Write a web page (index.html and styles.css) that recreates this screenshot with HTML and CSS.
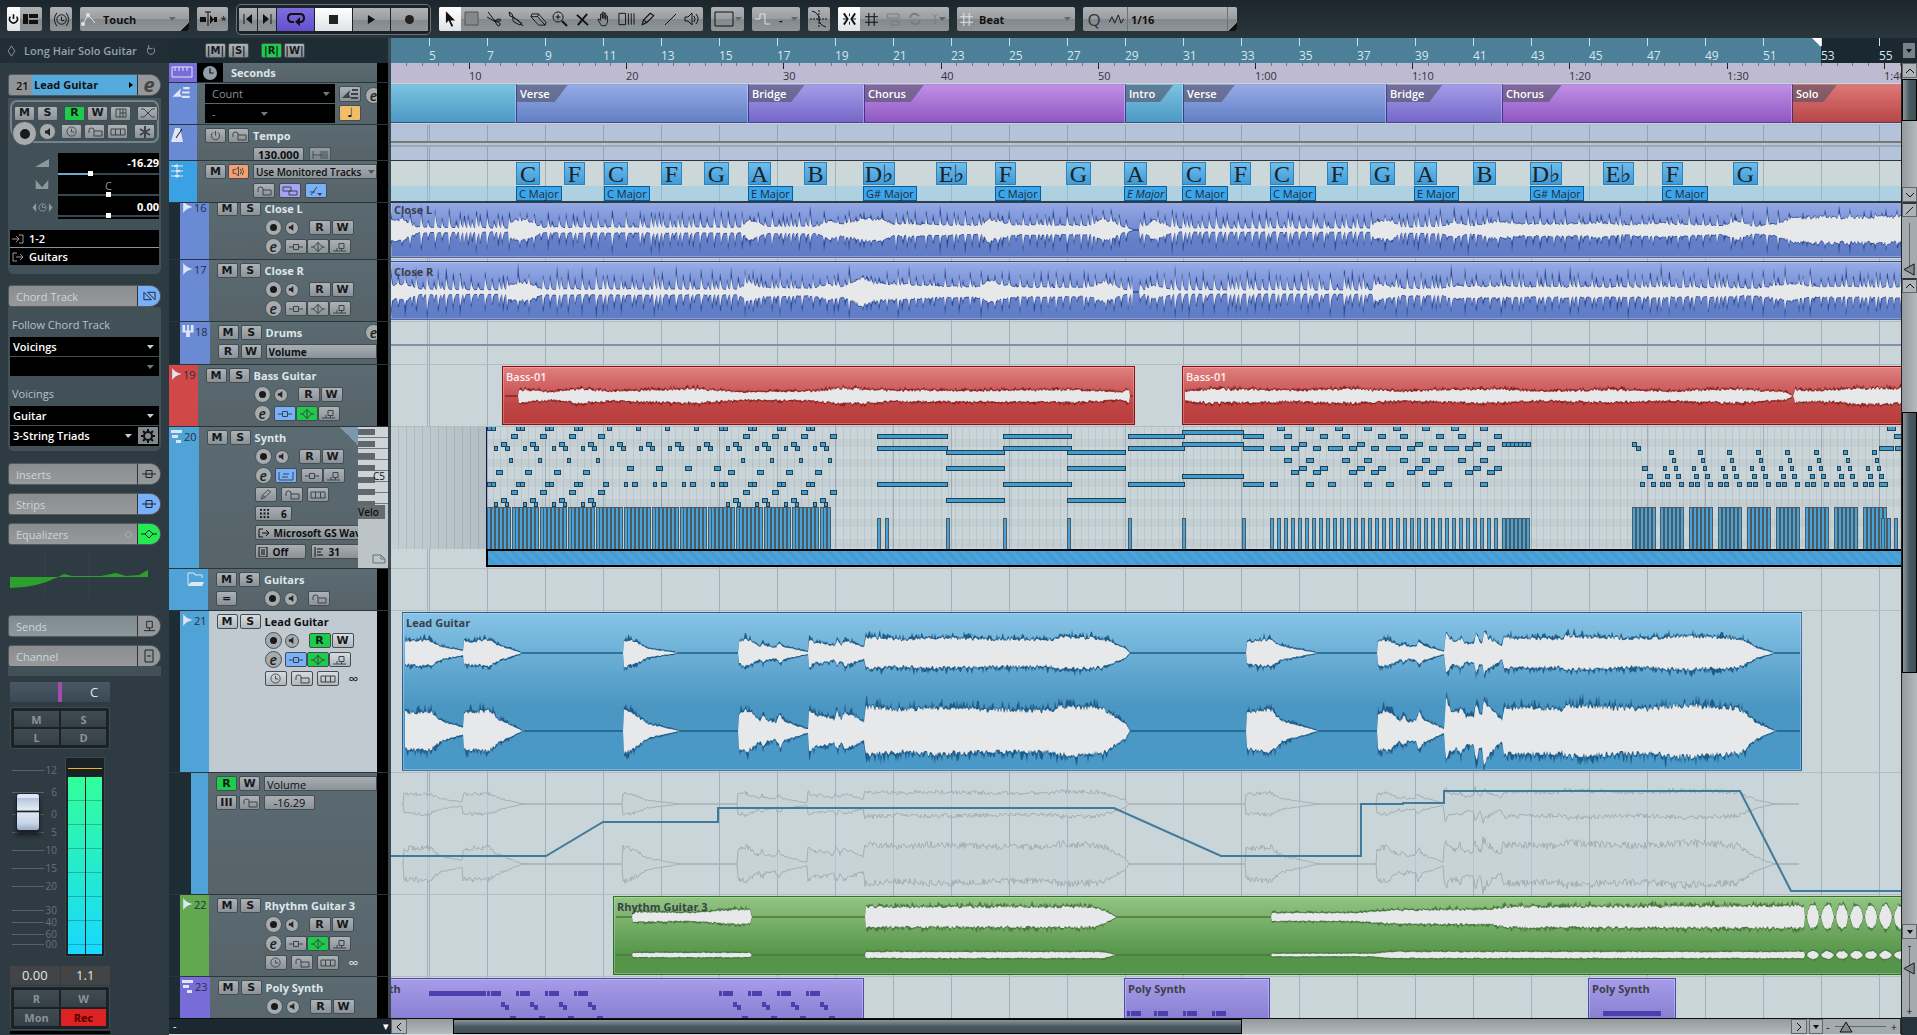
FILE: index.html
```
<!DOCTYPE html>
<html lang="en">
<head>
  <meta charset="UTF-8">
  <title>Project</title>
  <link rel="stylesheet" href="styles.css">
</head>
<body>
  <!-- icon sprite -->
  <svg class="sprite" width="0" height="0">
    <symbol id="i-lock" viewBox="0 0 16 10"><path d="M2 6V3q0-2 2.500-2t2.500 2v1M7 4h8v5H7z" /></symbol>
    <symbol id="i-clock" viewBox="0 0 12 12"><path d="M6 1a5 5 0 1 0 .1 0M6 3v3.500h3" /></symbol>
    <symbol id="i-lanes" viewBox="0 0 16 10"><path d="M1 2h14v6H1zM5.500 2v6M10.500 2v6" /></symbol>
    <symbol id="i-insert" viewBox="0 0 16 10"><path d="M1 5h4M11 5h4M5.500 2.500h5v5h-5z" /></symbol>
    <symbol id="i-eq" viewBox="0 0 16 12"><path d="M1 6h3M12 6h3M8 1v10M8 1.500L3.500 6L8 10.500L12.500 6z" /></symbol>
    <symbol id="i-send" viewBox="0 0 16 10"><path d="M1 9h4V6M5 9h9M7 1.500h5v5H7zM9.500 6.500V9" /></symbol>
    <symbol id="i-speaker" viewBox="0 0 10 10"><path class="solid" d="M2 3.500h2L7 1v8L4 6.500H2z" /></symbol>
    <symbol id="i-wave" viewBox="0 0 12 14"><path class="solid" d="M1 0Q4 5 12 7Q4 9 1 14z" /></symbol>
    <symbol id="i-midi" viewBox="0 0 12 13"><path class="solid" d="M0 0h11v3H0zM1 5h6v3H1zM5 10h5v3H5z" /></symbol>
    <symbol id="i-edit" viewBox="0 0 16 12"><path class="solid" d="M0 10l8-8l-1 5l2 3z" /><path class="solid" d="M10 1h6v2h-6zM9 5h7v2H9zM9 9h7v2H9z" /></symbol>
    <symbol id="i-power" viewBox="0 0 12 12"><path d="M3.500 2.500a4.500 4.500 0 1 0 5 0M6 1v5" /></symbol>
    <symbol id="i-pencil" viewBox="0 0 14 12"><path d="M2 11l1-4L9 1l3 2l-6 6zM3 7l3 2" /></symbol>
    <symbol id="i-strip" viewBox="0 0 16 10"><path d="M1 5h14M5 1.500h6v7H5z" /></symbol>
    <symbol id="i-grid" viewBox="0 0 14 14"><path d="M4.500 1v12M9.500 1v12M1 4.500h12M1 9.500h12" /></symbol>
    <symbol id="i-scale" viewBox="0 0 16 10"><path d="M1 1v8h14V1M5 3h6M4 6h6" /></symbol>
    <symbol id="i-out" viewBox="0 0 12 10"><path d="M5 1H1v8h4M4 5h7M8 2l3 3l-3 3" /></symbol>
    <symbol id="i-in" viewBox="0 0 12 10"><path d="M7 1h4v8H7M0 5h7M4 2l3 3l-3 3" /></symbol>
  </svg>

  <div class="app">
    <header class="toolbar">
      <div class="group">
        <button class="tb lit w13" aria-label="Activate project"><svg viewBox="0 0 14 16" width="11" height="14"><path class="bold" d="M3 5a5 5 0 1 0 8 0M7 2v6" /></svg></button>
        <button class="tb w22" aria-label="Window layout"><svg viewBox="0 0 16 12" width="16" height="12"><path class="solid" d="M0 1h5v10H0zM6 1h9v4H6zM6 7h9v4H6z" /></svg></button>
      </div>
      <div class="group">
        <button class="tb w22" aria-label="Delay compensation"><svg viewBox="0 0 18 18" width="17" height="17"><path d="M9 4a5 5 0 1 0 .1 0M9 6v4h3M4 2q-5 7 0 14M14 2q5 7 0 14" /></svg></button>
      </div>
      <div class="group touch">
        <svg class="light" viewBox="0 0 18 16" width="18" height="16"><path d="M3 13L8 4L12 8L15 12" /><circle class="solid" cx="3" cy="13" r="2" /><circle class="solid" cx="8" cy="4" r="2" /></svg>
        <select class="tb-select" aria-label="Automation mode"><option>Touch</option></select>
        <span class="corner"></span>
      </div>
      <div class="group">
        <button class="tb w22" aria-label="Auto scroll"><svg viewBox="0 0 18 16" width="18" height="18"><path class="solid" d="M1 6h6v5H1zM11 4l4 4.500L11 13zM15 6h3v5h-3z" /><path d="M9 1v14M6 1h6" /></svg></button>
        <button class="tb w9" aria-label="Suspend auto scroll">*</button>
      </div>
      <div class="transport">
        <button class="tb w18" aria-label="Previous"><svg viewBox="0 0 12 12" width="12" height="12"><path d="M2 1v10" /><path class="solid" d="M10 1v10L4 6z" /></svg></button>
        <button class="tb w18" aria-label="Next"><svg viewBox="0 0 12 12" width="12" height="12"><path d="M10 1v10" /><path class="solid" d="M2 1v10L8 6z" /></svg></button>
        <button class="tb w37 cycle" aria-label="Cycle"><svg viewBox="0 0 18 14" width="18" height="14"><path class="bold" d="M7 10H5Q1 10 1 6T5 2h8q4 0 4 4t-4 4" /><path class="solid" d="M13 5v9L8 10z" /></svg></button>
        <button class="tb w37 lit" aria-label="Stop"><i class="stop"></i></button>
        <button class="tb w37" aria-label="Play"><svg viewBox="0 0 10 10" width="9" height="9"><path class="solid" d="M1 0v10L9 5z" /></svg></button>
        <button class="tb w37" aria-label="Record"><i class="rec-dot"></i></button>
      </div>
      <div class="group tools">
        <button class="tb w22 lit" aria-label="Object selection"><svg viewBox="0 0 12 18" width="11" height="17"><path class="solid" d="M1 0v13l3-3l3 7l2-1l-3-6h5z" /></svg></button>
        <button class="tb w22" aria-label="Range selection"><svg viewBox="0 0 16 16" width="16" height="16"><path class="grey" d="M1 1h13v13H1z" /></svg></button>
        <button class="tb w22" aria-label="Split"><svg viewBox="0 0 16 16" width="16" height="16"><path d="M2 1l7 9M1 6l9 5M9 10l2 4q2 2 3 0t-2-3l-3-1l4 0q2 0 2-1t-3-1z" /></svg></button>
        <button class="tb w22" aria-label="Glue"><svg viewBox="0 0 16 16" width="16" height="16"><path d="M1 1l3 2l1 3l6 4l4 5M1 1l1 4l3 1M5 6q-1 3 1 5l6 3q2 0 1-3M5 6l7 5" /></svg></button>
        <button class="tb w22" aria-label="Erase"><svg viewBox="0 0 18 16" width="17" height="15"><path d="M2 2h7l8 9l-1 3H9L1 5zM1 5h7l8 9M8 5l1-3" /></svg></button>
        <button class="tb w22" aria-label="Zoom"><svg viewBox="0 0 16 16" width="16" height="16"><path d="M6 1a5 5 0 1 0 .1 0M6 3.500v5M3.500 6h5" /><path class="bold" d="M10 10l5 5" /></svg></button>
        <button class="tb w22" aria-label="Mute"><svg viewBox="0 0 14 14" width="13" height="15"><path class="bold" d="M1 2l12 11M12 1L2 13" /></svg></button>
        <button class="tb w22" aria-label="Time warp"><svg viewBox="0 0 16 18" width="14" height="17"><path d="M5 16L1 9q1-2 3 1V3q1-1 2 0v5V1q1-1 2 0v7V2q1-1 2 0v7V5q1-1 2 0v7l-2 4z" /></svg></button>
        <button class="tb w22" aria-label="Comp"><svg viewBox="0 0 18 14" width="17" height="14"><path d="M1 1h7v12H1zM11 1v12M14 1v12M17 1v12" /></svg></button>
        <button class="tb w22" aria-label="Draw"><svg viewBox="0 0 14 12" width="16" height="16"><use href="#i-pencil" /></svg></button>
        <button class="tb w22" aria-label="Line"><svg viewBox="0 0 14 14" width="14" height="14"><path d="M2 13L13 2" /></svg></button>
        <button class="tb w22" aria-label="Play tool"><svg viewBox="0 0 16 14" width="16" height="14"><path d="M1 5h3l4-4v12L4 9H1zM10 4q2 3 0 6M12 2q4 5 0 10" /></svg></button>
      </div>
      <div class="group w33">
        <button class="tb w33 drop" aria-label="Color menu"><svg viewBox="0 0 20 16" width="20" height="16"><path d="M1 1h18v14H1z" /></svg></button>
      </div>
      <div class="group w48">
        <button class="tb w48 drop" aria-label="Nudge"><svg class="light" viewBox="0 0 16 12" width="16" height="12"><path d="M0 6h5V1h5v10h5" /></svg><b>-</b></button>
      </div>
      <div class="group">
        <button class="tb w22" aria-label="Snap to zero crossing"><svg viewBox="0 0 18 18" width="18" height="18"><path stroke-dasharray="2 1" d="M9 0v18M0 9h18" /><path d="M2 1Q9 3 9 9T16 17" /></svg></button>
      </div>
      <div class="group snap">
        <button class="tb w22 lit" aria-label="Snap"><svg viewBox="0 0 16 14" width="15" height="14"><path class="bold" d="M2 1l4 6l-4 6M14 1l-4 6l4 6" /><path d="M8 1v3M8 10v3M1 7h5M15 7h-5" /></svg></button>
        <button class="tb w22" aria-label="Snap type grid"><svg width="15" height="15"><use href="#i-grid" /></svg></button>
        <span class="faint"><svg viewBox="0 0 14 14" width="14" height="14"><path d="M1 2h12v4H1zM5 9h8v4H5z" /></svg></span>
        <span class="faint"><svg viewBox="0 0 14 14" width="14" height="14"><path class="bold" d="M2 6q1-5 6-4l3 2M12 8q-1 5-6 4l-3-2" /></svg></span>
        <span class="faint drop"><svg viewBox="0 0 14 14" width="12" height="12"><path d="M7 3v10M4 1l3 3l3-3" /></svg></span>
      </div>
      <div class="group beat">
        <svg class="light" width="15" height="15"><use href="#i-grid" /></svg>
        <select class="tb-select" aria-label="Grid type"><option>Beat</option></select>
      </div>
      <div class="group quantize">
        <button class="tb w22 q" aria-label="Quantize">Q</button>
        <button class="tb w22" aria-label="Iterative quantize"><svg viewBox="0 0 16 12" width="15" height="11"><path d="M0 9l3-6l3 7l4-9l3 9l3-5" /></svg></button>
        <select class="tb-select bare" aria-label="Quantize preset"><option>1/16</option></select>
        <span class="corner"></span>
      </div>
    </header>

    <div class="main">
      <aside class="inspector">
        <div class="insp-title">
          <svg viewBox="0 0 10 14" width="9" height="12"><path d="M5 1l4 6l-4 6l-4-6z" /></svg>
          <span>Long Hair Solo Guitar</span>
          <svg viewBox="0 0 12 12" width="11" height="11"><path d="M4 3a4 4 0 1 0 5 0M4 0v4h4" /></svg>
        </div>

        <div class="section-bar track-name"><span class="num">21</span><b>Lead Guitar</b><i class="mini-arrow"></i><button class="badge e" aria-label="Edit channel">e</button></div>
        <div class="panel">
          <div class="insp-buttons">
            <button class="b">M</button><button class="b">S</button><button class="b on push">R</button><button class="b">W</button>
            <button class="b" aria-label="Freeze"><svg viewBox="0 0 14 10" width="14" height="10"><path d="M2 1h10v8H2zM6 1v8M9 1v8M6 5h6" /></svg></button>
            <button class="b push" aria-label="Auto fades"><svg viewBox="0 0 16 10" width="16" height="10"><path d="M1 1h3l8 8h3M1 9h3l8-8h3" /></svg></button>
          </div>
          <div class="insp-buttons">
            <button class="round big" aria-label="Record enable"><i></i></button>
            <button class="round" aria-label="Monitor"><svg width="10" height="10"><use href="#i-speaker" /></svg></button>
            <button class="b push2" aria-label="Time base"><svg width="11" height="11"><use href="#i-clock" /></svg></button>
            <button class="b" aria-label="Lock"><svg width="16" height="10"><use href="#i-lock" /></svg></button>
            <button class="b" aria-label="Lanes"><svg width="16" height="10"><use href="#i-lanes" /></svg></button>
            <button class="b push" aria-label="Freeze channel"><svg viewBox="0 0 12 12" width="12" height="12"><path class="bold" d="M6 0v12M1 3l10 6M11 3L1 9" /></svg></button>
          </div>
          <div class="levels">
            <div class="level-icons">
              <svg viewBox="0 0 14 8" width="14" height="8"><path class="solid" d="M0 8L14 0V8z" /></svg>
              <svg viewBox="0 0 14 10" width="14" height="9"><path class="solid" d="M0 0l7 8l7-8v10H0z" /></svg>
              <svg viewBox="0 0 22 12" width="21" height="11"><path class="solid" d="M4 1v10L0 6zM18 1v10L22 6z" /><path d="M11 2a4 4 0 1 0 .1 0M11 3v3h3" /></svg>
            </div>
            <div class="display">
              <output>-16.29</output><input class="thin vol" type="range" value="31" aria-label="Volume">
              <output class="mid">C</output><input class="thin" type="range" value="50" aria-label="Pan">
              <output>0.00</output><input class="thin" type="range" value="50" aria-label="Delay">
            </div>
          </div>
          <div class="io">
            <div><svg width="12" height="10"><use href="#i-in" /></svg>1-2</div>
            <div><svg width="12" height="10"><use href="#i-out" /></svg>Guitars</div>
          </div>
        </div>

        <div class="section-bar chord-bar">Chord Track<button class="badge blue" aria-label="Chord track"><svg viewBox="0 0 14 10" width="13" height="10"><path d="M1 1v8h8zM5 1h8v8z" /></svg></button></div>
        <div class="panel chord-panel">
          <label for="follow">Follow Chord Track</label>
          <select id="follow" class="black"><option>Voicings</option></select>
          <select class="black empty" aria-label="Follow source"><option></option></select>
          <label for="voicing">Voicings</label>
          <select id="voicing" class="black"><option>Guitar</option></select>
          <div class="with-gear">
            <select class="black" aria-label="Voicing type"><option>3-String Triads</option></select>
            <button class="gear" aria-label="Voicing setup"><svg viewBox="0 0 14 14" width="14" height="14"><circle class="bold" cx="7" cy="7" r="4" /><path class="bold" d="M7 0v3M7 11v3M0 7h3M11 7h3M2 2l2 2M10 10l2 2M12 2l-2 2M4 10l-2 2" /></svg></button>
          </div>
        </div>

        <div class="section-bar">Inserts<button class="badge" aria-label="Inserts"><svg width="16" height="10"><use href="#i-strip" /></svg></button></div>
        <div class="section-bar">Strips<button class="badge blue" aria-label="Strips"><svg width="16" height="10"><use href="#i-strip" /></svg></button></div>
        <div class="section-bar">Equalizers<svg class="dia" viewBox="0 0 10 10" width="9" height="9"><path d="M5 1L9 5L5 9L1 5z" /></svg><button class="badge green" aria-label="Equalizers"><svg viewBox="0 0 16 10" width="16" height="10"><path d="M0 5h4M12 5h4M8 1l4 4l-4 4l-4-4z" /></svg></button></div>
        <svg class="eq-curve" viewBox="0 0 153 60" height="60"><path class="guide" d="M37 5v48M81 5v48" /><path class="fill" d="M2 32H50Q28 43 2 43z" /><path class="fill" d="M48 33L56 29L64 31H93L108 28L118 31L131 30L140 25V32H48z" /></svg>
        <div class="section-bar sends">Sends<button class="badge" aria-label="Sends"><svg viewBox="0 0 14 12" width="13" height="12"><path d="M4 1h6v7H4zM1 11h12M7 8v3" /></svg></button></div>
        <div class="section-bar">Channel<button class="badge" aria-label="Channel"><svg viewBox="0 0 10 14" width="10" height="14"><path d="M1 1h8v12H1zM3 7h4" /></svg></button></div>
        <div class="panel channel-end"></div>

        <div class="channel">
          <div class="pan"><i></i><span>C</span></div>
          <div class="quad"><button>M</button><button>S</button><button>L</button><button>D</button></div>
          <div class="fader-row">
            <input class="fader" type="range" min="0" max="100" value="76" aria-label="Channel volume">
            <svg class="scale" id="scale" width="50" height="200"></svg>
            <div class="meter"><i></i><i></i></div>
          </div>
          <div class="nums"><output>0.00</output><output>1.1</output></div>
          <div class="quad low"><button>R</button><button>W</button><button>Mon</button><button class="rec">Rec</button></div>
          <div class="baseline"></div>
        </div>
      </aside>

      <section class="project">
        <div class="row ruler-row">
          <div class="head global">
            <button class="b wide">|M|</button><button class="b wide">|S|</button><button class="b wide on next">|R|</button><button class="b wide">|W|</button>
          </div>
          <div class="lane bars" id="bars"><div class="past"></div></div>
        </div>
        <div class="row seconds-row">
          <div class="head">
            <div class="strip violet"><svg viewBox="0 0 22 12" width="22" height="12"><path d="M1 1h20v10H1zM4 1v4M8 1v4M12 1v4M16 1v4" /></svg></div>
            <div class="clock-box"><svg viewBox="0 0 12 12" width="14" height="14"><circle class="solid" cx="6" cy="6" r="6" /><path class="hand" d="M6 2v4h3" /></svg></div>
            <div class="body seconds-name">Seconds</div>
            <div class="led"></div>
          </div>
          <div class="lane seconds" id="seconds"></div>
        </div>
        <div class="row arranger-row">
          <div class="head">
            <div class="strip azure"><svg width="20" height="13"><use href="#i-edit" /></svg></div>
            <div class="body arranger-body">
              <div class="stack"><select class="black dim" aria-label="Arranger step"><option>Count</option></select><select class="black dim half" aria-label="Arranger chain"><option>-</option></select></div>
              <div class="stack"><button class="b tall" aria-label="Arranger mode"><svg width="16" height="12"><use href="#i-edit" /></svg></button><button class="b amber" aria-label="Musical time">♩</button></div>
              <button class="round edge" aria-label="Edit arranger">e</button>
            </div>
            <div class="led"></div>
          </div>
          <div class="lane" id="arranger"></div>
        </div>
        <div class="row tempo-row">
          <div class="head">
            <div class="strip azure"><svg viewBox="0 0 12 14" width="12" height="14"><path class="solid" d="M4 0h5l3 14H0z" /><path class="hand" d="M5 10l6-9" /></svg></div>
            <div class="body">
              <div class="ms"><button class="b" aria-label="Activate tempo"><svg width="11" height="11"><use href="#i-power" /></svg></button><button class="b" aria-label="Lock"><svg width="16" height="10"><use href="#i-lock" /></svg></button></div>
              <div class="ctl"><div class="line name">Tempo</div><div class="line"><input class="field" value="130.000" aria-label="Tempo"><button class="b dimmed" aria-label="Tempo curve"><svg viewBox="0 0 16 10" width="16" height="10"><path d="M1 1v8M1 5h9M9 1v8M11 1v8M13 1v8M15 1v8" /></svg></button></div></div>
            </div>
            <div class="led"></div>
          </div>
          <div class="lane tempo grid"></div>
        </div>
        <div class="row chord-row">
          <div class="head">
            <div class="strip cyan"><svg viewBox="0 0 12 14" width="12" height="14"><path d="M0 2h12M0 7h12M0 12h12M6 0v14" /><path class="solid" d="M3 1h4v2H3zM5 6h4v2H5zM4 11h4v2H4z" /></svg></div>
            <div class="body">
              <div class="ms"><button class="b">M</button><button class="b orange" aria-label="Acoustic feedback"><svg viewBox="0 0 14 12" width="13" height="11"><path d="M1 4h3l3-3v10L4 8H1zM9 3q2 3 0 6M11 2q3 4 0 8" /></svg></button></div>
              <div class="ctl">
                <div class="line"><select class="grey-select snug" aria-label="Monitored tracks"><option>Use Monitored Tracks</option></select></div>
                <div class="line spaced"><button class="b" aria-label="Lock"><svg width="16" height="10"><use href="#i-lock" /></svg></button><button class="b lilac" aria-label="Show scales"><svg viewBox="0 0 16 10" width="16" height="10"><path d="M1 1h8v4H1zM7 5h8v4H7z" /></svg></button><button class="b bl" aria-label="Map to chord"><svg viewBox="0 0 14 10" width="14" height="10"><path d="M2 9L8 1M1 6h5" /><path class="solid" d="M8 7h5l-2 3z" /></svg></button></div>
              </div>
            </div>
            <div class="led"></div>
          </div>
          <div class="lane chords grid" id="chords"></div>
        </div>

        <div class="tracks">
          <div class="row t62">
            <div class="head in1"><div class="strip azure"><svg width="11" height="12"><use href="#i-wave" /></svg>16</div>
              <div class="body"><div class="ms"><button class="b">M</button><button class="b">S</button></div>
                <div class="ctl"><div class="line name">Close L</div>
                  <div class="line" data-ctl="rec"></div><div class="line" data-ctl="fx"></div></div></div>
              <div class="led"></div></div>
            <div class="lane grid" id="closeL"></div>
          </div>
          <div class="row t62">
            <div class="head in1"><div class="strip azure"><svg width="11" height="12"><use href="#i-wave" /></svg>17</div>
              <div class="body"><div class="ms"><button class="b">M</button><button class="b">S</button></div>
                <div class="ctl"><div class="line name">Close R</div>
                  <div class="line" data-ctl="rec"></div><div class="line" data-ctl="fx"></div></div></div>
              <div class="led"></div></div>
            <div class="lane grid" id="closeR"></div>
          </div>
          <div class="row t43">
            <div class="head in1"><div class="strip azure"><svg viewBox="0 0 12 14" width="12" height="13"><path class="solid" d="M0 0h3v6h2V0h2v6h2V0h3v8H8v5H4V8H0z" /></svg>18</div>
              <div class="body"><div class="ms"><button class="b">M</button><button class="b">S</button><button class="b">R</button><button class="b">W</button></div>
                <div class="ctl"><div class="line name">Drums<button class="round edge" aria-label="Edit channel">e</button></div><div class="line"><select class="grey-select no-arrow" aria-label="Drums parameter"><option>Volume</option></select></div></div></div>
              <div class="led"></div></div>
            <div class="lane grid drums"></div>
          </div>
          <div class="row t62">
            <div class="head"><div class="strip red"><svg width="11" height="12"><use href="#i-wave" /></svg>19</div>
              <div class="body"><div class="ms"><button class="b">M</button><button class="b">S</button></div>
                <div class="ctl"><div class="line name">Bass Guitar</div>
                  <div class="line" data-ctl="rec"></div><div class="line" data-ctl="fx" data-on="ie"></div></div></div>
              <div class="led"></div></div>
            <div class="lane grid" id="bass"></div>
          </div>
          <div class="row t142">
            <div class="head"><div class="strip sky"><svg width="12" height="13"><use href="#i-midi" /></svg>20</div>
              <div class="body fold"><div class="ms"><button class="b">M</button><button class="b">S</button></div>
                <div class="ctl"><div class="line name">Synth</div>
                  <div class="line" data-ctl="rec"></div>
                  <div class="line fx"><button class="round">e</button><button class="b bl" aria-label="Instrument"><svg width="16" height="10"><use href="#i-scale" /></svg></button><button class="b ml" aria-label="Inserts"><svg width="16" height="10"><use href="#i-insert" /></svg></button><button class="b" aria-label="Sends"><svg width="16" height="10"><use href="#i-send" /></svg></button></div>
                  <div class="line spaced"><button class="b" aria-label="Drum map"><svg width="14" height="11"><use href="#i-pencil" /></svg></button><button class="b" aria-label="Lock"><svg width="16" height="10"><use href="#i-lock" /></svg></button><button class="b" aria-label="Lanes"><svg width="16" height="10"><use href="#i-lanes" /></svg></button></div>
                  <div class="line"><button class="val"><svg viewBox="0 0 10 10" width="9" height="9"><path class="bold" stroke-dasharray="2 2" d="M0 1h10M0 5h10M0 9h10" /></svg>6</button></div>
                  <div class="line"><button class="val long"><svg width="12" height="10"><use href="#i-out" /></svg>Microsoft GS Wav</button></div>
                  <div class="line"><button class="val off"><svg viewBox="0 0 10 10" width="10" height="10"><path d="M1 0h8v10H1zM3 3h4M3 5h4M3 7h4" /></svg>Off</button><button class="val off"><svg viewBox="0 0 10 10" width="10" height="10"><path d="M1 0v10M3 2h6M3 5h4M3 8h6" /></svg>31</button></div>
                </div></div>
              <div class="keys"><div class="piano"><span>C5</span></div><div class="velo">Velo</div><svg class="page" viewBox="0 0 14 10" width="14" height="10"><path d="M1 1h8l4 4v4H1zM9 1v4h4" /></svg></div></div>
            <div class="lane grid" id="synth"></div>
          </div>
          <div class="row t42">
            <div class="head"><div class="strip sky folder"><svg viewBox="0 0 18 14" width="18" height="14"><path d="M1 13V1h6l1 2h7v3M1 13l4-2" /><path class="solid" d="M4 10h13l-2 4H1z" /></svg></div>
              <div class="body"><div class="ms"><button class="b">M</button><button class="b">S</button><button class="b">=</button></div>
                <div class="ctl"><div class="line name">Guitars</div><div class="line" data-ctl="rec-lock"></div></div></div>
              <div class="led"></div></div>
            <div class="lane grid"></div>
          </div>
          <div class="row t162">
            <div class="head in1 selected"><div class="strip sky"><svg width="11" height="12"><use href="#i-wave" /></svg>21</div>
              <div class="body"><div class="ms"><button class="b">M</button><button class="b">S</button></div>
                <div class="ctl"><div class="line name">Lead Guitar</div>
                  <div class="line" data-ctl="rec" data-on="r"></div><div class="line" data-ctl="fx" data-on="ie"></div><div class="line spaced" data-ctl="extra"></div></div></div>
              <div class="led"></div></div>
            <div class="lane grid" id="lead"></div>
          </div>
          <div class="row t122">
            <div class="head in2"><div class="strip sky"></div>
              <div class="body"><div class="ms"><button class="b on">R</button><button class="b">W</button><button class="b">III</button><button class="b" aria-label="Lock"><svg width="16" height="10"><use href="#i-lock" /></svg></button></div>
                <div class="ctl"><div class="line"><select class="grey-select plain no-arrow" aria-label="Automation parameter"><option>Volume</option></select></div><div class="line"><input class="field plain" value="-16.29" aria-label="Automation value"></div></div></div>
              <div class="led"></div></div>
            <div class="lane grid" id="auto"></div>
          </div>
          <div class="row t82">
            <div class="head in1"><div class="strip green"><svg width="11" height="12"><use href="#i-wave" /></svg>22</div>
              <div class="body"><div class="ms"><button class="b">M</button><button class="b">S</button></div>
                <div class="ctl"><div class="line name">Rhythm Guitar 3</div>
                  <div class="line" data-ctl="rec"></div><div class="line" data-ctl="fx" data-on="e"></div><div class="line spaced" data-ctl="extra"></div></div></div>
              <div class="led"></div></div>
            <div class="lane grid" id="rhythm"></div>
          </div>
          <div class="row t62">
            <div class="head in1"><div class="strip violet"><svg width="12" height="13"><use href="#i-midi" /></svg>23</div>
              <div class="body"><div class="ms"><button class="b">M</button><button class="b">S</button></div>
                <div class="ctl"><div class="line name">Poly Synth</div>
                  <div class="line" data-ctl="rec"></div></div></div>
              <div class="led"></div></div>
            <div class="lane grid" id="poly"></div>
          </div>
        </div>

        <div class="bottom">
          <div class="bottom-head"><span>-</span><span>▾</span></div>
          <button class="sb" aria-label="Scroll left"><svg viewBox="0 0 6 10" width="6" height="10"><path d="M5 1L1 5l4 4" /></svg></button>
          <div class="hscroll"><div class="thumb"></div></div>
          <button class="sb" aria-label="Scroll right"><svg viewBox="0 0 6 10" width="6" height="10"><path d="M1 1l4 4l-4 4" /></svg></button>
          <button class="sb gap" aria-label="Zoom presets"><i class="down"></i></button>
          <div class="hzoom"><span>-</span><div class="rail"><svg viewBox="0 0 14 12" width="14" height="12"><path d="M7 1l6 10H1z" /></svg></div><span>+</span></div>
        </div>
      </section>

      <div class="vbar">
        <div class="vtop"><button aria-label="Ruler menu"><i class="down"></i></button></div>
        <button class="sb" aria-label="Scroll up"><svg viewBox="0 0 10 6" width="10" height="6"><path d="M1 5l4-4l4 4" /></svg></button>
        <div class="vs first"><div class="thumb"></div></div>
        <button class="sb" aria-label="Scroll down"><svg viewBox="0 0 10 6" width="10" height="6"><path d="M1 1l4 4l4-4" /></svg></button>
        <button class="sb sep" aria-label="Divide track list"><svg viewBox="0 0 10 10" width="9" height="9"><path d="M1 9l8-8" /></svg></button>
        <div class="vzoom one"><svg viewBox="0 0 14 14" width="13" height="13"><path d="M12 1v12L1 7z" /></svg></div>
        <button class="sb sep" aria-label="Scroll up"><svg viewBox="0 0 10 6" width="10" height="6"><path d="M1 5l4-4l4 4" /></svg></button>
        <div class="vs"><div class="thumb"></div></div>
        <button class="sb" aria-label="Scroll down"><i class="down"></i></button>
        <div class="vzoom two"><span>-</span><svg viewBox="0 0 14 14" width="13" height="13"><path d="M12 1v12L1 7z" /></svg><span>+</span></div>
        <div class="vcorner"></div>
      </div>
    </div>
  </div>
  <script src="script.js"></script>
</body>
</html>
```

FILE: styles.css
```
* {
  box-sizing: border-box;
}
body {
  margin: 0;
  background: #2f3b42;
  font-family: "Open Sans", "Noto Sans", sans-serif;
  font-size: 11px;
  color: #dfe6e9;
  overflow: hidden;
}
button, select, input, output {
  font: inherit;
  margin: 0;
  padding: 0;
  border: 0;
  color: inherit;
  border-radius: 0;
  min-width: 0;
}
button {
  display: flex;
  align-items: center;
  justify-content: center;
}
select {
  appearance: none;
  background-repeat: no-repeat;
}
svg {
  fill: none;
  stroke: currentColor;
  stroke-width: 1;
  flex: none;
}
.sprite {
  position: absolute;
}
.solid {
  fill: currentColor;
  stroke: none;
}
.bold {
  stroke-width: 2;
}
.hand {
  stroke: #111;
}
.grey {
  fill: #85888b;
  stroke: #555;
}
.light {
  color: #dfe3e6;
}
.app {
  display: grid;
  grid-template-rows: 38px 1fr;
  height: 100vh;
}

/* toolbar */
.toolbar {
  display: flex;
  align-items: center;
  gap: 8px;
  padding: 0 7px;
  background: linear-gradient(#1c262c, #2a363d);
  color: #111;
}
.group, .transport {
  display: flex;
  height: 24px;
}
.group {
  background: linear-gradient(#b0b3b6, #9a9ea1 50%, #84898d 52%, #8f9498);
  border-radius: 2px;
  align-items: center;
  overflow: hidden;
}
.group .tb {
  height: 24px;
}
.tb {
  background: none;
}
.tb.lit {
  background: linear-gradient(#fff, #dfe2e6);
}
.w9 { width: 9px; }
.w13 { width: 13px; }
.w18 { width: 18px; }
.w22 { width: 22px; }
.w33 { width: 33px; }
.w37 { width: 37px; }
.w48 { width: 48px; }
.tb-select {
  background: url("data:image/svg+xml,%3Csvg xmlns='http://www.w3.org/2000/svg' width='7' height='4'%3E%3Cpath d='M0 0h7L3 4z' fill='%23666'/%3E%3C/svg%3E") no-repeat right 4px center;
  flex: 1;
  height: 24px;
  padding-left: 5px;
  font-weight: 700;
  font-size: 11px;
}
.tb-select.bare {
  background-image: none;
  border: 1px solid #6c7276;
  border-width: 0 1px;
  padding-left: 3px;
}
.corner {
  align-self: flex-end;
  width: 9px;
  height: 9px;
  background: linear-gradient(135deg, transparent 55%, #111 55%);
}
.touch { width: 109px; }
.beat { width: 118px; padding-left: 2px; }
.quantize { width: 154px; }
.q { font-size: 17px; color: #333; }
.tools .tb { width: 22px; }
.snap { width: 111px; }
.faint {
  width: 22px;
  display: flex;
  justify-content: center;
  color: #777c80;
}
.drop {
  background: url("data:image/svg+xml,%3Csvg xmlns='http://www.w3.org/2000/svg' width='7' height='4'%3E%3Cpath d='M0 0h7L3 4z' fill='%23666'/%3E%3C/svg%3E") no-repeat right 2px center;
  justify-content: flex-start;
  padding-left: 3px;
  gap: 8px;
}
.transport {
  height: 31px;
  padding: 3px 2px;
  gap: 1px;
  border: 1px solid #6b757a;
  border-radius: 5px;
  background: #1a2227;
}
.transport .tb:not(.lit):not(.cycle) {
  background: linear-gradient(#b0b3b6, #9a9ea1 50%, #84898d 52%, #8f9498);
}
.transport .cycle {
  background: linear-gradient(#7f6ce0, #6450cc);
}
.stop {
  width: 9px;
  height: 9px;
  background: #222;
}
.rec-dot {
  width: 9px;
  height: 9px;
  border-radius: 50%;
  background: #222;
}

/* frame */
.main {
  display: grid;
  grid-template-columns: 169px 1fr 16px;
  min-height: 0;
}

/* inspector */
.inspector {
  padding: 0 8px;
  background: #2f3b42;
  overflow: hidden;
}
.insp-title {
  display: flex;
  align-items: center;
  gap: 8px;
  height: 25px;
  margin: 0 -8px 11px;
  padding: 0 18px 0 7px;
  background: #222e35;
  color: #92a2a9;
  font-weight: 600;
}
.insp-title span {
  flex: 1;
  white-space: nowrap;
}
.section-bar {
  display: flex;
  align-items: center;
  height: 22px;
  margin-bottom: 8px;
  padding-left: 7px;
  border-radius: 3px 11px 11px 3px;
  border: 1px solid #53595d;
  background: linear-gradient(#8a8c8e, #97999b);
  color: #ccd6dc;
}
.badge {
  width: 23px;
  height: 20px;
  margin-left: auto;
  border-left: 1px solid #333;
  border-radius: 0 10px 10px 0;
  background: #95989a;
  color: #1d2327;
}
.badge.blue { background: #78b0fa; }
.badge.green { background: #22ea50; }
.badge.e {
  font: italic bold 20px/16px "Open Sans", sans-serif;
  color: #444;
}
.sends { background: linear-gradient(#7d8b90, #8b989c); }
.dia {
  margin-left: auto;
  color: #b5babd;
}
.dia + .badge { margin-left: 4px; }
.track-name {
  padding-left: 7px;
  margin-bottom: 2px;
  color: #111;
  background: #909497;
}
.track-name .num {
  width: 16px;
  font-weight: 600;
}
.track-name b {
  flex: 1;
  height: 20px;
  line-height: 20px;
  padding-left: 2px;
  background: #55aadd;
}
.mini-arrow {
  width: 12px;
  height: 20px;
  background: #55aadd url("data:image/svg+xml,%3Csvg xmlns='http://www.w3.org/2000/svg' width='4' height='6'%3E%3Cpath d='M0 0v6l4-3z'/%3E%3C/svg%3E") no-repeat center;
}
.panel {
  padding: 2px 2px 9px;
  border-radius: 0 0 6px 6px;
  background: #425158;
}
.insp-buttons {
  display: flex;
  align-items: center;
  gap: 2px;
  height: 22px;
  padding: 2px 2px 0;
  border: 2px solid #76838a;
  border-bottom: 0;
  border-radius: 7px 7px 0 0;
}
.insp-buttons + .insp-buttons {
  height: 21px;
  border: 2px solid #76838a;
  border-top: 0;
  border-radius: 0 0 7px 16px;
  padding: 0;
}
.insp-buttons .b { flex: 0 0 21px; }
.push { margin-left: 4px; }
.push2 { margin-left: 3px; }
.levels {
  display: flex;
  margin-top: 10px;
}
.level-icons {
  display: flex;
  flex-direction: column;
  align-items: center;
  justify-content: space-around;
  width: 48px;
  padding-left: 16px;
  color: #8d989d;
}
.display {
  display: grid;
  flex: 1;
  height: 66px;
  background: #000;
  color: #fff;
  grid-template-rows: 18px 5px 16px 5px 16px 5px;
}
.display output {
  text-align: right;
  font-weight: 700;
  line-height: 20px;
}
.display .mid {
  text-align: center;
  font-weight: 400;
  color: #8d989d;
}
.thin {
  appearance: none;
  width: 100%;
  height: 5px;
  background: linear-gradient(#3a474e, #3a474e) no-repeat center / 100% 2px;
}
.thin.vol {
  background: linear-gradient(90deg, #6ea6cc 31%, #3a474e 31%) no-repeat center / 100% 2px;
}
.thin::-webkit-slider-thumb {
  appearance: none;
  width: 5px;
  height: 5px;
  background: #fff;
}
.io {
  display: grid;
  gap: 1px;
  margin-top: 11px;
  background: #8a9398;
  color: #fff;
  font-weight: 600;
}
.io div {
  display: flex;
  align-items: center;
  gap: 5px;
  height: 17px;
  padding-left: 2px;
  background: #000;
}
.io svg { color: #9a9a9a; }
.chord-bar { margin: 11px 0 0; }
.chord-panel {
  margin-bottom: 12px;
  padding: 1px 2px 5px;
}
.chord-panel label {
  display: block;
  height: 29px;
  padding: 9px 2px 0;
  color: #b4c2c9;
}
.chord-panel select { margin-bottom: 1px; }
.black {
  display: block;
  width: 100%;
  height: 19px;
  padding-left: 3px;
  background: #000 url("data:image/svg+xml,%3Csvg xmlns='http://www.w3.org/2000/svg' width='7' height='4'%3E%3Cpath d='M0 0h7L3 4z' fill='%23ccc'/%3E%3C/svg%3E") no-repeat right 5px center;
  color: #fff;
  font-weight: 600;
}
.black.empty, .black.dim {
  background-image: url("data:image/svg+xml,%3Csvg xmlns='http://www.w3.org/2000/svg' width='7' height='4'%3E%3Cpath d='M0 0h7L3 4z' fill='%23777'/%3E%3C/svg%3E");
}
.with-gear { display: flex; background: #000; }
.with-gear .black { flex: 1; }
.gear {
  width: 20px;
  height: 17px;
  margin: 1px;
  background: #83898d;
  color: #111;
}
.eq-curve {
  display: block;
  width: 153px;
  margin: -8px 0 10px;
}
.eq-curve .fill { fill: #2ca02c; stroke: none; }
.eq-curve .guide { stroke: #33434a; }
.channel-end {
  height: 10px;
  margin-top: -9px;
  padding: 0;
  border-radius: 0;
}
.channel {
  width: 100px;
  margin: 6px 0 0 2px;
}
.pan {
  display: flex;
  align-items: center;
  justify-content: flex-end;
  height: 20px;
  background: linear-gradient(#4b5763, #3a4857);
}
.pan i {
  width: 4px;
  height: 20px;
  background: #a24eaa;
  margin-right: 28px;
}
.pan span {
  width: 20px;
  font-size: 13px;
}
.quad {
  display: grid;
  grid-template-columns: 1fr 1fr;
  gap: 2px;
  padding: 3px;
  margin-top: 5px;
  border: 1px solid #424b50;
  border-radius: 3px;
  background: #1b2226;
}
.quad button {
  height: 16px;
  background: linear-gradient(#414c52, #343f46);
  color: #8a9398;
  font-weight: 700;
}
.quad .rec {
  background: #dc2222;
  color: #500;
}
.fader-row {
  display: grid;
  grid-template-columns: 30px 20px 1fr;
  align-items: start;
  height: 206px;
  margin-top: 8px;
}
.scale {
  grid-area: 1 / 1 / 2 / 3;
}
.scale text {
  font-size: 10px;
  fill: #65737a;
  stroke: none;
  text-anchor: end;
}
.scale path { stroke: #55636a; }
.fader {
  grid-area: 1 / 1;
  z-index: 1;
  appearance: none;
  width: 24px;
  height: 190px;
  margin-left: 6px;
  background: none;
  writing-mode: vertical-lr;
  direction: rtl;
  font-size: 0;
}
.fader::-webkit-slider-thumb {
  appearance: none;
  width: 24px;
  height: 38px;
  border: 1px solid #1b2226;
  border-radius: 3px;
  background: linear-gradient(#dce6f6 10%, #b4c4dc 12%, #e4ecf8 45%, #222 47%, #222 50%, #dce6f4 52%, #c8d6ea 80%, #9cabc2);
  box-shadow: 0 5px 4px #1a2226;
}
.meter {
  grid-area: 1 / 3;
  display: flex;
  gap: 1px;
  width: 40px;
  height: 200px;
  justify-self: end;
  margin-right: 5px;
  padding: 19px 2px 2px;
  border: 1px solid #3d474c;
  background: linear-gradient(#e8b820, #e8b820) no-repeat 2px 10px / 34px 1px, #1b2226;
}
.meter i {
  flex: 1;
  background: repeating-linear-gradient(transparent 0 23px, rgba(0, 60, 60, .3) 23px 24px), linear-gradient(#33ff99, #18d8ff);
}
.nums {
  display: grid;
  grid-template-columns: 1fr 1fr;
  gap: 1px;
  height: 19px;
  margin-top: 3px;
  text-align: center;
  font-size: 13px;
  line-height: 19px;
}
.nums output { background: #424446; }
.quad.low { margin-top: 1px; }
.low button { height: 17px; }
.baseline {
  height: 3px;
  margin-top: 1px;
  background: #000;
}

/* track rows */
.project {
  display: flex;
  flex-direction: column;
  min-width: 0;
  min-height: 0;
}
.row {
  display: flex;
  flex: none;
}
.head {
  display: flex;
  flex: 0 0 222px;
  border-bottom: 1px solid #2b363c;
  border-right: 3px solid #3c4a51;
  background: #1e2c34;
  overflow: hidden;
}
.head.in1 { padding-left: 11px; }
.head.in2 { padding-left: 22px; }
.in2 .strip { flex-basis: 17px; }
.lane {
  position: relative;
  flex: 1;
  min-width: 0;
  overflow: hidden;
  background: #cad5d9;
  border-bottom: 1px solid #b2bdc2;
}
/* one line every two bars of 29px */
.grid {
  background-image: repeating-linear-gradient(90deg, rgba(60, 80, 90, .28) 0 1px, transparent 1px 58px);
  background-position: 38px 0;
}
.strip {
  display: flex;
  flex: 0 0 28px;
  gap: 1px;
  padding: 3px 2px;
  line-height: 14px;
  color: #24323c;
}
.strip svg { color: #dde6f6; }
.strip.folder { flex-basis: 39px; padding-left: 18px; }
.violet { background: #786cd8; }
.azure { background: #6b8ad6; }
.cyan { background: #3aa2e4; }
.red { background: #d04848; }
.sky { background: #4fa3d6; }
.green { background: #62a850; }
.body {
  display: flex;
  flex: 1;
  min-width: 0;
  gap: 4px;
  padding: 3px 0 0 8px;
  background: linear-gradient(#5b6b72, #566369);
  overflow: hidden;
}
.fold {
  background: linear-gradient(45deg, transparent 50%, #7d97ab 50%) no-repeat right top / 18px 18px, linear-gradient(#5b6b72, #566369);
}
.selected .body {
  background: #c1cad0;
  color: #111;
}
.led {
  flex: 0 0 11px;
  background: #000;
}
.ms {
  display: grid;
  grid-template-columns: 21px 21px;
  gap: 4px 2px;
  align-content: start;
}
.b {
  height: 15px;
  width: 22px;
  flex: none;
  border: 1px solid #444d52;
  border-radius: 2px;
  background: linear-gradient(#adb2b6, #8b9297);
  color: #15191c;
  font: bold 11px/12px "DejaVu Sans", sans-serif;
}
.ms .b { width: 21px; }
.b svg { color: #3c4449; }
.b.on, .selected .b.on { background: #1dcc4a; }
.b.bl, .b.bl-on { background: #78b0fa; }
.b.lilac { background: #a6a2f4; }
.b.orange { background: #f4a070; }
.b.amber { background: #f2bd6a; font-size: 13px; }
.b.dimmed { opacity: .7; }
.ml { margin-left: 4px; }
.selected .b:not(.on):not(.bl-on) { background: linear-gradient(#d8dce0, #b0b7bc); }
.ctl { flex: 1; min-width: 0; }
.line {
  display: flex;
  align-items: center;
  gap: 1px;
  height: 19px;
  white-space: nowrap;
}
.line:first-child { height: 15px; margin-bottom: 2px; }
.name { font-weight: 700; }
.line.spaced { gap: 4px; }
.round {
  width: 17px;
  height: 17px;
  flex: none;
  border-radius: 50%;
  background: #a6abae;
  border: 1px solid #475157;
  color: #222;
  font: italic 600 14px/12px "Open Sans", sans-serif;
}
.round i {
  width: 7px;
  height: 7px;
  border-radius: 50%;
  background: #1a1a1a;
}
.round.small { width: 14px; height: 14px; margin: 0 9px 0 2px; }
.round.big { width: 25px; height: 25px; margin-top: 4px; }
.round.big i { width: 10px; height: 10px; }
.round.edge { margin-left: auto; margin-right: -5px; }
.line.fx { gap: 0; }
.fx .round { margin-right: 3px; }
.link { font-size: 14px; margin-left: 6px; }
.grey-select {
  width: 100%;
  height: 15px;
  padding-left: 2px;
  border: 1px solid #444d52;
  background: url("data:image/svg+xml,%3Csvg xmlns='http://www.w3.org/2000/svg' width='7' height='4'%3E%3Cpath d='M0 0h7L3 4z' fill='%23555'/%3E%3C/svg%3E") no-repeat right 1px center, linear-gradient(#a9aeb2, #8b9297);
  color: #0c0f11;
  font-weight: 700;
  font-size: 10px;
}
.no-arrow { background: linear-gradient(#a9aeb2, #8b9297); }
.snug { font-weight: 600; }
.plain.plain { font-weight: 400; font-size: 11px; }
.field, .val {
  width: 51px;
  height: 15px;
  border: 1px solid #444d52;
  border-radius: 2px;
  background: linear-gradient(#a9aeb2, #8b9297);
  color: #0c0f11;
  text-align: center;
  font-weight: 700;
}
.field { margin-right: 4px; }
.val {
  display: flex;
  justify-content: space-between;
  flex: none;
  width: 37px;
  padding: 0 4px;
  white-space: nowrap;
  font-size: 10px;
}
.val.long { width: 130px; justify-content: flex-start; gap: 4px; padding: 0 2px; }
.val.off { width: 51px; justify-content: flex-start; gap: 5px; margin-right: 4px; padding: 0 2px; }
.global {
  align-items: center;
  gap: 2px;
  padding-left: 36px;
  border-bottom: 0;
  background: #1e2c34;
}
.wide { width: 21px; font-size: 10px; }
.next { margin-left: 10px; }
.ruler-row { height: 25px; }
.seconds-row { height: 20px; }
.arranger-row { height: 42px; }
.tempo-row { height: 36px; }
.chord-row { height: 42px; }
.t42 { height: 42px; }
.t43 { height: 43px; }
.t62 { height: 62px; }
.t82 { height: 82px; }
.t122 { height: 122px; }
.t142 { height: 142px; }
.t162 { height: 162px; }
.clock-box {
  display: flex;
  align-items: center;
  justify-content: center;
  width: 26px;
  background: #000;
  color: #8fa0a8;
}
.seconds-name {
  padding-top: 2px;
  font-weight: 700;
}
.arranger-body { padding-top: 1px; align-items: flex-start; }
.stack { display: grid; gap: 1px; }
.stack:first-child { width: 131px; }
.stack .b { height: 16px; margin-top: 2px; }
.dim { color: #8a8f92; font-weight: 400; padding-left: 7px; }
.dim.half { background-position: 56px center; }
.arranger-body .edge { margin-top: 3px; }

/* lanes */
.bars { background: #4c7f98; border: 0; }
.past {
  position: absolute;
  top: 0;
  right: 0;
  bottom: 0;
  left: 1430px;
  background: #1a2830;
}
.past::before {
  content: "";
  position: absolute;
  left: -9px;
  border-top: 9px solid #fff;
  border-left: 9px solid transparent;
}
.bars span, .seconds span {
  position: absolute;
  color: #d4e6f0;
  font-size: 12px;
  line-height: 14px;
  padding-top: 11px;
  background: linear-gradient(#cde, #cde) no-repeat 0 0 / 1px 8px;
}
.seconds {
  background-color: #bdbad2;
  border: 0;
}
.seconds span {
  color: #33343f;
  font-size: 11px;
  padding-top: 6px;
  background: linear-gradient(#222, #222) no-repeat 0 0 / 1px 6px;
}
.seconds i {
  position: absolute;
  width: 1px;
  height: 3px;
  background: #777;
}
.part {
  position: absolute;
  top: 1px;
  bottom: 1px;
  border: 1px solid rgba(255, 255, 255, .3);
  border-left-color: rgba(30, 30, 120, .7);
  border-bottom-color: rgba(30, 30, 120, .7);
  color: #fff;
  font-weight: 600;
}
.part span {
  display: inline-block;
  height: 17px;
  padding: 0 18px 0 3px;
  line-height: 17px;
  background: rgba(80, 80, 100, .6);
  clip-path: polygon(0 0, 100% 0, calc(100% - 13px) 100%, 0 100%);
}
.p-intro { background: linear-gradient(#7cc2e2, #4b9ac4); }
.p-verse { background: linear-gradient(#96abe6, #627fc4); }
.p-bridge { background: linear-gradient(#a69be8, #7468c8); }
.p-chorus { background: linear-gradient(#bf90e6, #9057c2); }
.p-solo { background: linear-gradient(#dd7777, #b84646); }
.tempo {
  background-color: #b4c3da;
  border-color: #333;
}
.tempo::after {
  content: "";
  position: absolute;
  left: 0;
  right: 0;
  top: 16px;
  height: 6px;
  background: linear-gradient(#767b76 0 2px, #b4c3da 2px 4px, #a0a7b4 4px);
}
.chords {
  background-color: #ccd7da;
  border-bottom: 2px solid #333c40;
}
.chords::before {
  content: "";
  position: absolute;
  left: 0;
  right: 0;
  top: 25px;
  bottom: 0;
  background: rgba(130, 200, 235, .4);
}
.chord {
  position: absolute;
  top: 1px;
  height: 23px;
  border: 1px solid #2a83ba;
  background: linear-gradient(#70bdec, #3e9bd8);
  color: #1c2226;
  font: 24px/22px "Liberation Serif", serif;
  text-align: center;
}
.key {
  position: absolute;
  top: 25px;
  height: 15px;
  padding: 0 2px;
  border: 1px solid #0a5c94;
  background: #3ca4e8;
  color: #1c2c38;
  line-height: 13px;
  font-size: 11px;
  white-space: nowrap;
}
.tracks {
  flex: 1;
  min-height: 0;
  overflow: hidden;
}
.tracks .row:first-child { margin-top: -5px; }
.drums::after {
  content: "";
  position: absolute;
  left: 0;
  right: 0;
  top: 22px;
  height: 2px;
  background: #8590a8;
}
.clip {
  position: absolute;
  top: 1px;
  bottom: 1px;
  border: 1px solid rgba(0, 0, 60, .4);
  box-shadow: inset 0 0 0 1px rgba(255, 255, 255, .25);
  overflow: hidden;
}
.clip b {
  position: absolute;
  left: 3px;
  top: 2px;
  color: #3a4148;
  white-space: nowrap;
}
.clip svg { position: absolute; left: 0; top: 0; }
.clip .peak, .clip .core { stroke: none; }
.core { fill: #e6e8ea; }
.c-blue { background: linear-gradient(#98ace8, #6480c8 70%, #5f7cc6); }
.c-blue .peak { fill: #2f4a94; }
.c-red { background: linear-gradient(#e08080, #c04646 65%, #b83c3c); border-color: #8c1010; }
.c-red .peak { fill: #8c2424; }
.c-red b { color: #fff0f0; font-weight: 600; }
.c-sky { background: linear-gradient(#86c3e6, #4a96c2 60%, #4999c8); }
.c-sky .peak { fill: #1f5c88; }
.c-green { background: linear-gradient(#92c482, #559549 75%); border-color: #2c7420; }
.c-green .peak { fill: #4a7840; }
.c-violet { background: linear-gradient(#a79ce8, #7a70c8); background-size: 100% 60px; border-color: #5248b0; }
.c-violet rect { fill: #4c40ac; stroke: none; }
.ghost { fill: #c6d2d6; fill-opacity: .6; stroke: #a5b0b4; }
.curve { stroke: #427a9c; stroke-width: 2; }
.lane > svg { position: absolute; left: 0; top: 0; }
.before {
  position: absolute;
  left: 0;
  top: 0;
  width: 96px;
  height: 122px;
  border-right: 1px solid #115;
  background: repeating-linear-gradient(90deg, transparent 0 7px, rgba(60, 80, 90, .15) 7px 8px), linear-gradient(90deg, #c4cfd3, #b3bec2);
}
.fine {
  position: absolute;
  left: 96px;
  right: 0;
  top: 0;
  height: 122px;
  background: repeating-linear-gradient(90deg, transparent 0 6px, rgba(60, 80, 90, .1) 6px 7px), repeating-linear-gradient(transparent 0 12px, rgba(60, 80, 90, .05) 12px 20px);
}
.midi-bar {
  position: absolute;
  left: 95px;
  right: -4px;
  top: 122px;
  height: 18px;
  border: 2px solid #000;
  background: repeating-linear-gradient(45deg, #4ba3dc 0 4px, #439bd2 4px 7px);
}
.note { fill: #3f9dd2; stroke: #24404f; }
.vel { fill: #46a2d8; stroke: #4c5a62; }
.keys {
  display: flex;
  flex-direction: column;
  flex: 0 0 30px;
  background: #bcc4c7;
}
.piano {
  height: 78px;
  background: repeating-linear-gradient(#5f686d 0 6px, transparent 6px 12px) no-repeat 0 2px / 17px 76px, repeating-linear-gradient(#cdd3d6 0 10px, #71797d 10px 11px);
  color: #111;
}
.piano span {
  display: block;
  padding: 41px 0 0 15px;
  font-size: 10px;
  line-height: 16px;
}
.velo {
  width: 27px;
  height: 14px;
  background: #666b6d;
  color: #111;
  font-size: 10px;
  line-height: 14px;
  font-weight: 600;
}
.page {
  margin: auto 2px 4px auto;
  color: #667074;
}

/* scroll bars */
.bottom {
  display: flex;
  flex: none;
  height: 17px;
  border-top: 1px solid #111;
  border-bottom: 1px solid #d8dcde;
  background: #a4abae;
  color: #111;
}
.bottom-head {
  display: flex;
  justify-content: space-between;
  flex: 0 0 222px;
  padding: 0 2px 0 4px;
  background: #1b2830;
  color: #fff;
  line-height: 13px;
}
.sb {
  flex: none;
  width: 16px;
  height: 15px;
  border: 1px solid #60686c;
  background: #adb3b6;
  color: #111;
}
.gap { margin-left: 2px; width: 14px; }
.down {
  border: 3px solid transparent;
  border-top: 4px solid #111;
  border-bottom: 0;
}
.hscroll {
  flex: 1;
  background: linear-gradient(#93999c, #b4babd);
}
.hscroll .thumb {
  width: 57%;
  height: 15px;
  margin-left: 46px;
  border: 1px solid #000;
  background: linear-gradient(#8b979c, #4a5960 50%, #3f4f57);
}
.hzoom {
  display: flex;
  align-items: center;
  gap: 5px;
  flex: 0 0 78px;
  padding: 0 3px;
  border-right: 1px solid #333;
}
.rail {
  flex: 1;
  height: 12px;
  background: linear-gradient(#60686c, #60686c) no-repeat center / 100% 1px;
}
.rail svg, .vzoom svg { fill: #82898d; display: block; }
.rail svg { margin-left: 4px; }
.vbar {
  display: flex;
  flex-direction: column;
  background: #a4abae;
  border-left: 1px solid #222;
  color: #111;
  min-height: 0;
}
.vbar .sb { width: 15px; }
.vtop {
  flex: 0 0 25px;
  padding: 5px 1px;
  background: #1b2830;
}
.vtop button {
  width: 12px;
  height: 15px;
  background: #74838a;
}
.vs {
  flex: 1;
  background: linear-gradient(90deg, #93999c, #b4babd);
  padding-top: 119px;
}
.vs .thumb {
  height: 51%;
  border: 1px solid #000;
  background: linear-gradient(90deg, #8b979c, #4a5960 50%, #3f4f57);
}
.vs.first { flex: 0 0 109px; padding-top: 1px; }
.vs.first .thumb { height: 39%; }
.sep { border-top: 2px solid #333; }
.vzoom {
  display: flex;
  flex-direction: column;
  flex: none;
  align-items: center;
  background: linear-gradient(#60686c, #60686c) no-repeat center / 1px 80%;
}
.vzoom.one { height: 61px; justify-content: flex-end; padding-bottom: 2px; }
.vzoom.two { height: 78px; justify-content: space-between; line-height: 12px; }
.vzoom.two svg { margin-bottom: 20px; }
.vcorner {
  flex: 0 0 18px;
  background: #25333a;
}
```

FILE: script.js
```
const BAR = 29;
const barX = (b) => 38 + (b - 5) * BAR;
const $ = (id) => document.getElementById(id);
const laneWidth = $('closeL').clientWidth;

// small seeded generator, so that the waveforms are the same on every load
let seed = 7;
function rnd() {
  seed = (seed * 16807) % 2147483647;
  return seed / 2147483647;
}

function add(lane, cls, left, width, html) {
  const el = document.createElement('div');
  el.className = cls;
  el.style.left = left + 'px';
  if (width) el.style.width = width + 'px';
  el.innerHTML = html;
  lane.appendChild(el);
  return el;
}

// shared track controls
const icon = (name, w = 16, h = 10) => `<svg width="${w}" height="${h}"><use href="#i-${name}" /></svg>`;
document.querySelectorAll('[data-ctl]').forEach((el) => {
  const on = el.dataset.on || '';
  const kind = el.dataset.ctl;
  if (kind.startsWith('rec')) {
    el.innerHTML = '<button class="round" aria-label="Record enable"><i></i></button>' +
      `<button class="round small" aria-label="Monitor">${icon('speaker', 9, 9)}</button>` +
      (kind === 'rec-lock'
        ? `<button class="b" aria-label="Lock">${icon('lock')}</button>`
        : `<button class="b ${on.includes('r') ? 'on' : ''}">R</button><button class="b">W</button>`);
  } else if (kind === 'fx') {
    el.classList.add('fx');
    el.innerHTML = '<button class="round">e</button>' +
      `<button class="b ${on.includes('i') ? 'bl-on' : ''}" aria-label="Inserts">${icon('insert')}</button>` +
      `<button class="b ${on.includes('e') ? 'on' : ''}" aria-label="Equalizer">${icon('eq', 16, 12)}</button>` +
      `<button class="b" aria-label="Sends">${icon('send')}</button>`;
  } else {
    el.innerHTML = `<button class="b" aria-label="Time base">${icon('clock', 11, 11)}</button>` +
      `<button class="b" aria-label="Lock">${icon('lock')}</button>` +
      `<button class="b" aria-label="Lanes">${icon('lanes')}</button><span class="link">∞</span>`;
  }
});

// rulers
for (let b = 5; b <= 55; b += 2) {
  $('bars').insertAdjacentHTML('beforeend', `<span style="left:${barX(b)}px">${b}</span>`);
}
for (let s = 6; s < 102; s++) {
  const x = Math.round(78 + (s - 10) * 15.72);
  const label = s < 60 ? s : '1:' + String(s - 60).padStart(2, '0');
  $('seconds').insertAdjacentHTML('beforeend',
    s % 10 ? `<i style="left:${x}px"></i>` : `<span style="left:${x}px">${label}</span>`);
}

// arranger parts: start bar, name
const parts = [[3, ''], [8, 'Verse'], [16, 'Bridge'], [20, 'Chorus'], [29, 'Intro'], [31, 'Verse'], [38, 'Bridge'], [42, 'Chorus'], [52, 'Solo'], [58, '']];
parts.slice(0, -1).forEach(([b, name], i) => {
  add($('arranger'), 'part p-' + (name || 'Intro').toLowerCase(), barX(b), (parts[i + 1][0] - b) * BAR, name ? `<span>${name}</span>` : '');
});

// chords: x, width, name, key
const chords = [
  [125, 24, 'C', 'C Major'], [173, 21, 'F'], [213, 24, 'C', 'C Major'], [270, 21, 'F'], [313, 25, 'G'],
  [357, 23, 'A', 'E Major'], [413, 23, 'B'], [472, 32, 'D♭', 'G# Major'], [545, 31, 'E♭'], [604, 21, 'F', 'C Major'],
  [675, 25, 'G'], [733, 23, 'A', 'E Major'], [791, 24, 'C', 'C Major'], [839, 21, 'F'], [879, 24, 'C', 'C Major'],
  [936, 21, 'F'], [979, 25, 'G'], [1023, 23, 'A', 'E Major'], [1082, 23, 'B'], [1139, 32, 'D♭', 'G# Major'],
  [1212, 31, 'E♭'], [1271, 21, 'F', 'C Major'], [1342, 25, 'G']
];
chords.forEach(([x, w, name, key]) => {
  add($('chords'), 'chord', x, w, name);
  if (key) add($('chords'), 'key', x, 0, x === 733 ? `<i>${key}</i>` : key);
});

// linear envelope through [x, amp] points
function envelope(points) {
  return (x) => {
    for (let i = 1; i < points.length; i++) {
      if (x <= points[i][0]) {
        const [x0, a0] = points[i - 1];
        const [x1, a1] = points[i];
        return x < x0 ? 0 : a0 + (a1 - a0) * (x - x0) / (x1 - x0 || 1);
      }
    }
    return 0;
  };
}

function shape(top, bottom, from, mid) {
  const up = top.map((a, i) => `${from + i} ${(mid - a).toFixed(1)}`);
  const down = bottom.map((a, i) => `${from + i} ${(mid + a).toFixed(1)}`).reverse();
  return 'M' + up.concat(down).join('L') + 'z';
}

const layers = (peak, core, from, mid) =>
  `<path class="peak" d="${shape(peak[0], peak[1], from, mid)}" /><path class="core" d="${shape(core[0], core[1], from, mid)}" />`;

// body of the wave in white, its peaks in the darker shade behind it
function wave(env, from, to, mid, scale, rough) {
  const core = [[], []];
  const peak = [[], []];
  for (let x = from; x < to; x++) {
    const a = env(x) * scale;
    for (let side = 0; side < 2; side++) {
      const c = a * (1 - rough + rnd() * rough);
      const r = rnd();
      core[side].push(Math.max(0, c - 0.5));
      peak[side].push(Math.max(0.7, c + (a > 1 ? 0.6 : 0) + a * r * r * r * 0.35));
    }
  }
  return layers(peak, core, from, mid);
}

// drum recording: short hits with a thin dark peak and a fast decay
function hits(env, from, to, mid, scale, size) {
  const core = [[], []];
  const peak = [[], []];
  let start = from;
  let next = from;
  let h = 0;
  let beat = 0;
  for (let x = from; x < to; x++) {
    if (x >= next) {
      start = x;
      beat += 1;
      h = beat % 2 ? 0.7 + rnd() * 0.3 : 0.35 + rnd() * 0.45;
      next = x + (rnd() > 0.4 ? 7 : 4);
    }
    const a = env(x) * scale;
    const d = x - start;
    const live = a > 0.5;
    for (let side = 0; side < 2; side++) {
      const s = live ? h * size * 0.72 * Math.exp(-d / 1.6) : 0;
      const c = Math.max(0, a * (0.7 + rnd() * 0.3), s * (0.75 + rnd() * 0.3));
      core[side].push(live ? c : 0);
      peak[side].push(live && d < 2 ? Math.max(c + 1, h * size * (1 - d * 0.3) * (0.75 + rnd() * 0.35)) : c + 0.8);
    }
  }
  return layers(peak, core, from, mid);
}

function clip(lane, cls, left, width, name, height, art) {
  add($(lane), 'clip ' + cls, left, width,
    `<svg width="${width}" height="${height}" viewBox="${left} 0 ${width} ${height}">${art}</svg><b>${name}</b>`);
}

const drumsEnv = envelope([
  [-5, 11], [10, 12], [26, 3], [100, 2], [116, 2], [118, 10], [134, 12], [150, 3], [350, 3], [357, 12], [374, 4], [425, 4], [437, 11],
  [450, 7], [472, 12], [488, 13], [502, 7], [590, 5], [596, 13], [620, 6], [690, 5], [700, 6], [712, 13], [732, 3], [742, 0],
  [747, 0], [748, 9], [752, 2], [762, 12], [782, 2], [980, 2], [982, 10], [1000, 11], [1010, 3], [1050, 4], [1062, 9], [1080, 4],
  [1105, 10], [1130, 7], [1195, 7], [1205, 9], [1230, 5], [1260, 8], [1330, 5], [1345, 11], [1362, 4], [1385, 7], [1400, 14],
  [1450, 15], [1600, 14]
]);
const drumsEnvR = envelope([
  [-5, 8], [14, 9], [26, 3], [114, 2], [118, 9], [134, 11], [150, 3], [345, 3], [357, 11], [370, 5], [420, 4], [435, 9],
  [450, 6], [470, 16], [482, 10], [560, 6], [590, 6], [596, 13], [620, 6], [690, 5], [700, 6], [712, 12], [732, 3], [742, 0],
  [747, 0], [748, 9], [752, 2], [762, 8], [782, 2], [980, 2], [982, 10], [1010, 4], [1050, 4], [1062, 7], [1130, 6], [1260, 6],
  [1330, 5], [1362, 4], [1400, 10], [1420, 6], [1600, 6]
]);
clip('closeL', 'c-blue', -1, laneWidth + 4, 'Close L', 60, hits(drumsEnv, -1, laneWidth + 4, 30, 1, 25));
clip('closeR', 'c-blue', -1, laneWidth + 4, 'Close R', 60, hits(drumsEnvR, -1, laneWidth + 4, 30, 1, 28));

const bassEnv = envelope([
  [126, 0], [127, 8], [160, 5], [190, 9], [220, 6], [300, 9], [350, 5], [420, 6], [450, 10], [500, 7], [600, 7], [680, 8],
  [730, 5], [737, 9], [738, 0], [792, 0], [793, 6], [820, 9], [900, 7], [960, 9], [1010, 6], [1090, 9], [1150, 6], [1220, 8],
  [1280, 6], [1340, 9], [1395, 5], [1401, 0], [1403, 8], [1430, 7], [1470, 10], [1600, 8]
]);
clip('bass', 'c-red', 111, 633, 'Bass-01', 58, wave(bassEnv, 113, 742, 29, 1, 0.35));
clip('bass', 'c-red', 791, laneWidth - 787, 'Bass-01', 58, wave(bassEnv, 793, laneWidth, 29, 1, 0.35));

const leadEnv = envelope([
  [12, 0], [13, 23], [38, 24], [50, 12], [71, 5], [72, 22], [97, 25], [108, 14], [130, 1], [140, 0], [231, 0], [232, 26], [241, 23],
  [256, 9], [286, 1], [290, 0], [346, 0], [347, 22], [355, 26], [368, 13], [371, 20], [374, 14], [384, 11], [388, 20], [392, 12],
  [415, 3], [416, 3], [417, 27], [424, 18], [430, 20], [442, 14], [445, 24], [449, 15], [453, 24], [472, 12], [474, 30], [510, 26],
  [540, 29], [600, 26], [660, 25], [668, 30], [710, 28], [734, 9], [738, 0], [854, 0], [855, 22], [879, 26], [890, 13], [925, 1],
  [930, 0], [985, 0], [986, 23], [996, 25], [1008, 13], [1012, 18], [1016, 12], [1024, 13], [1027, 23], [1032, 14], [1052, 3],
  [1054, 38], [1058, 26], [1064, 22], [1069, 28], [1074, 18], [1082, 18], [1084, 36], [1088, 20], [1090, 20], [1092, 40], [1096, 30],
  [1110, 14], [1112, 29], [1170, 27], [1174, 32], [1250, 27], [1290, 32], [1347, 28], [1365, 10], [1382, 1], [1390, 0]
]);
clip('lead', 'c-sky', 11, 1400, 'Lead Guitar', 160,
  wave(leadEnv, 13, 1409, 40, 0.6, 0.22) + wave(leadEnv, 13, 1409, 118, 0.92, 0.22));

// automation lane: outline of the wave and the volume curve over it
function outline(mid, scale) {
  const sides = [[], []];
  for (let x = 11; x < 1409; x++) {
    sides.forEach((s) => s.push(leadEnv(x) * scale * (0.75 + rnd() * 0.35)));
  }
  return `<path class="ghost" d="${shape(sides[0], sides[1], 11, mid)}" />`;
}
$('auto').innerHTML = `<svg width="${laneWidth}" height="121">${outline(31, 0.46)}${outline(91, 0.72)}` +
  `<path class="curve" d="M0 83H155L212 49H327V35H723L830 83H970V31H1012V30H1053V18H1349L1400 118H${laneWidth}" /></svg>`;

const rhythmTop = envelope([
  [240, 0], [241, 6], [300, 5], [350, 9], [358, 8], [360, 0], [473, 0], [474, 12], [700, 12], [712, 8], [725, 0], [879, 0],
  [880, 5], [960, 5], [1000, 8], [1100, 9], [1115, 12], [1408, 13], [1412, 12], [1413, 0]
]);
const rhythmLow = envelope([
  [240, 0], [241, 3], [358, 3], [360, 0], [473, 0], [474, 4], [712, 4], [725, 0], [879, 0], [880, 2], [980, 2], [1000, 4], [1412, 4], [1413, 0]
]);
// palm mutes after bar 52
function chops(fn, amp) {
  return (x) => {
    if (x <= 1414) return fn(x);
    const t = ((x - 1415) % 14.5) / 12;
    return t < 1 ? amp * Math.sqrt(Math.sin(Math.PI * t)) : 0;
  };
}
clip('rhythm', 'c-green', 222, laneWidth - 218, 'Rhythm Guitar 3', 80,
  wave(chops(rhythmTop, 14), 224, laneWidth, 20, 1, 0.25) + wave(chops(rhythmLow, 5), 224, laneWidth, 58, 1, 0.25));

// poly synth parts
const block = (x, y, w, h = 5) => `<rect x="${x}" y="${y}" width="${w}" height="${h}" />`;
let riff = block(37, 12, 57);
[95, 124, 153, 182, 327, 356, 385, 414].forEach((x) => {
  riff += block(x, 12, 3) + block(x + 4, 12, 10) + block(x + 14, 23, 4) + block(x + 18, 26, 4) + block(x + 23, 37, 6);
});
clip('poly', 'c-violet', -52, 525, 'Poly Synth', 60, riff);
clip('poly', 'c-violet', 733, 146, 'Poly Synth', 60, [735, 762, 791, 820].map((x) => block(x, 32, 3) + block(x + 4, 32, 10)).join(''));
clip('poly', 'c-violet', 1197, 88, 'Poly Synth', 60, block(1211, 32, 58));

// synth notes: [x, semitone row, width]
const notes = [];
const put = (row, width, xs) => xs.forEach((x) => notes.push([x, row, width]));
for (let i = 0; i < 12; i++) {
  const x = 96 + i * BAR;
  if (i < 4 || i > 7) {
    put(0, 4, [x, x + 4]);
    put(2, 6, [x + 24]);
    put(8, 3, [x + 22]);
    put(11, 6, [x + 9]);
    put(14, 4, [x, x + 4]);
    put(16, 6, [x + 24]);
    put(18, 5, [x + 14]);
    put(19, 3, [x + 7, x + 18]);
  } else {
    put(0, 4, [x + 4]);
    put(10, 6, [x + 24]);
    put(14, 5, [x]);
    put(14, 3, [x + 21]);
  }
  put(4, 5, [x + 14]);
  put(5, 3, [x + 7]);
  put(5, 4, [x + 18]);
}
[[486, 70], [612, 68], [737, 56]].forEach(([x, w]) => [2, 5, 14].forEach((r) => notes.push([x, r, w])));
[[555, 58], [676, 58]].forEach(([x, w]) => [6, 10, 18].forEach((r) => notes.push([x, r, w])));
[1, 4, 12].forEach((r) => notes.push([791, r, 61]));
[2, 5, 14].forEach((r) => notes.push([852, r, 20]));
for (let i = 0; i < 4; i++) {
  const x = 879 + i * 58;
  put(0, 7, [x + 7, x + 36]);
  put(2, 7, [x + 14, x + 50]);
  put(4, 7, [x + 29]);
  put(5, 14, [x]);
  put(5, 7, [x + 21, x + 43]);
  put(8, 7, [x + 14, x + 36]);
  put(10, 7, [x + 29, x + 50]);
  put(11, 7, [x + 21, x + 43]);
  put(14, 7, [x, x + 36]);
}
for (let x = 1111; x < 1138; x += 4) put(4, 4, [x]);
put(4, 4, [1241]); put(5, 4, [1245]); put(10, 5, [1251]); put(12, 5, [1256]); put(14, 4, [1249, 1260]);
for (let i = 0; i < 8; i++) {
  const x = 1269 + i * BAR;
  put(6, 4, [x + 9]);
  put(8, 3, [x + 12]);
  put(10, 3, [x + 3, x + 14]);
  put(12, 4, [x + 5, x + 16]);
  put(14, 4, [x, x + 6, x + 19]);
}
put(0, 8, [1496]); put(2, 8, [1503]); put(5, 14, [1488, 1504]); put(14, 8, [1488]);

let art = notes.map(([x, r, w]) => `<rect class="note" x="${x + 0.5}" y="${r * 4 - 0.5}" width="${w}" height="4" />`).join('');
const vel = (x, top) => `<rect class="vel" x="${x + 0.5}" y="${top + 0.5}" width="3" height="${122 - top}" />`;
for (let x = 96; x < 440; x += 4) art += (x - 96) % 28 === 24 ? vel(x + 1, 80) : vel(x, 80);
[486, 494, 555, 612, 676, 737, 791, 851].forEach((x) => { art += vel(x, 91); });
for (let x = 879; x < 1110; x += 7) art += vel(x, 91);
for (let x = 1111; x < 1138; x += 4) art += vel(x, 91);
for (let x = 1241; x < 1262; x += 4) art += vel(x, 80);
for (let i = 0; i < 8; i++) for (let k = 0; k < 6; k++) art += vel(1269 + i * BAR + k * 4, 80);
[1490, 1496, 1503].forEach((x) => { art += vel(x, 91); });
$('synth').innerHTML = `<div class="before"></div><div class="fine"></div><svg width="${laneWidth}" height="124">${art}</svg><div class="midi-bar"></div>`;

// fader scale
$('scale').innerHTML = [[12, 13], [6, 35], [0, 57], [5, 75], [10, 93], [15, 111], [20, 129], [30, 153], [40, 165], [60, 177], ['00', 187]]
  .map(([v, y]) => `<path d="M2 ${y + 0.5}H34" /><text x="47" y="${y + 4}">${v}</text>`).join('');
```
